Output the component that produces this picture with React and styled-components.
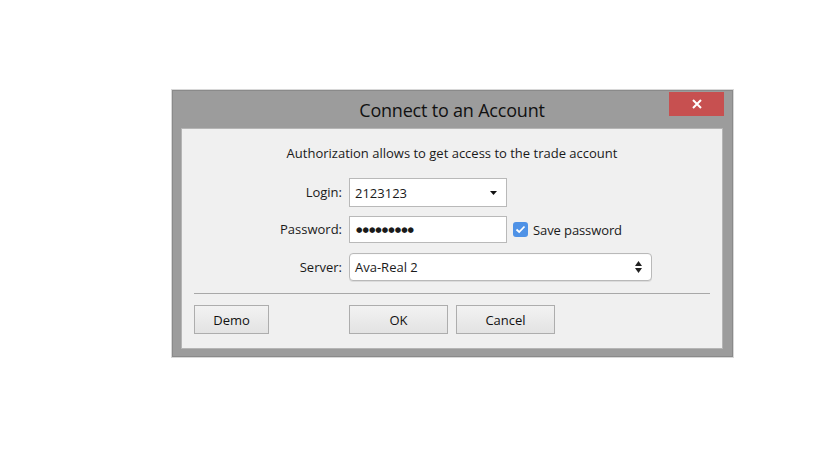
import React from 'react';
import styled, { createGlobalStyle } from 'styled-components';

const GlobalStyle = createGlobalStyle`
  html, body {
    margin: 0;
    padding: 0;
    background: #ffffff;
  }
  body {
    font-family: "Open Sans", "Noto Sans", sans-serif;
    color: #1a1a1a;
  }
`;

const Page = styled.div`
  width: 834px;
  height: 453px;
  padding: 90px 0 0 172px;
  box-sizing: border-box;
`;

const Window = styled.div`
  position: relative;
  width: 561px;
  background: #9c9c9c;
  border: 1px solid #8a8a8a;
  box-sizing: border-box;
  padding: 0 9px 7px 8px;
  box-shadow: 0 0 0 1px #d8d8d8;
`;

const TitleBar = styled.div`
  height: 37px;
  display: flex;
  align-items: center;
  justify-content: center;
  font-size: 18px;
  color: #111;
  letter-spacing: -0.2px;
`;

const CloseButton = styled.button`
  position: absolute;
  top: 1px;
  right: 8px;
  width: 55px;
  height: 24px;
  border: none;
  background: #c75050;
  color: #fff;
  display: flex;
  align-items: center;
  justify-content: center;
  padding: 0;
`;

const Content = styled.div`
  background: #f0f0f0;
  border: 1px solid #b5b5b5;
  padding: 15px 12px 14px 12px;
`;

const Subtitle = styled.div`
  text-align: center;
  font-size: 13px;
  line-height: 18px;
  margin-bottom: 16px;
`;

const Form = styled.div`
  display: grid;
  grid-template-columns: 148px 1fr;
  grid-template-rows: 29px 28px 28px;
  column-gap: 7px;
  row-gap: 9px;
  align-items: start;
`;

const Label = styled.div`
  text-align: right;
  font-size: 13px;
  line-height: ${p => p.$h}px;
`;

const FieldRow = styled.div`
  display: flex;
  align-items: center;
  gap: 6px;
`;

const Input = styled.div`
  width: ${p => p.$w}px;
  height: ${p => p.$h}px;
  box-sizing: border-box;
  background: #fff;
  border: 1px solid #b9b9b9;
  border-radius: ${p => (p.$round ? '4px' : '0')};
  display: flex;
  align-items: center;
  justify-content: space-between;
  padding: 0 9px 0 5px;
  font-size: 13px;
  ${p => p.$round && 'box-shadow: inset 0 1px 0 #fafafa, 0 1px 0 #dcdcdc;'}
`;

const Dots = styled.span`
  font-family: "DejaVu Sans", sans-serif;
  font-size: 7.4px;
  padding-left: 1px;
`;

const Check = styled.span`
  width: 15px;
  height: 15px;
  border-radius: 3px;
  background: #4f92e6;
  display: inline-flex;
  align-items: center;
  justify-content: center;
`;

const CheckLabel = styled.label`
  display: flex;
  align-items: center;
  gap: 5px;
  font-size: 13px;
  letter-spacing: -0.1px;
`;

const Separator = styled.div`
  height: 1px;
  background: #a8a8a8;
  margin: 12px 0 11px 0;
`;

const Buttons = styled.div`
  display: grid;
  grid-template-columns: 148px 1fr;
  column-gap: 7px;
`;

const ButtonGroup = styled.div`
  display: flex;
  gap: 8px;
`;

const Button = styled.button`
  width: ${p => p.$w}px;
  height: 29px;
  box-sizing: border-box;
  border: 1px solid #adadad;
  background: linear-gradient(#f2f2f2, #e3e3e3);
  font-family: "Open Sans", "Noto Sans", sans-serif;
  font-size: 13px;
  color: #111;
  padding: 0;
`;

const Caret = () => (
  <svg width="7" height="4" viewBox="0 0 7 4">
    <path d="M0 0 H7 L3.5 4 Z" fill="#111" />
  </svg>
);

const UpDown = () => (
  <svg width="7" height="12" viewBox="0 0 7 12">
    <path d="M0 5 L3.5 0 L7 5 Z" fill="#222" />
    <path d="M0 7 L3.5 12 L7 7 Z" fill="#222" />
  </svg>
);

export default function App() {
  return (
    <>
      <GlobalStyle />
      <Page>
        <Window>
          <TitleBar>Connect to an Account</TitleBar>
          <CloseButton aria-label="Close">
            <svg width="10" height="10" viewBox="0 0 10 10">
              <path d="M1 1 L9 9 M9 1 L1 9" stroke="#fff" strokeWidth="2" />
            </svg>
          </CloseButton>
          <Content>
            <Subtitle>Authorization allows to get access to the trade account</Subtitle>
            <Form>
              <Label $h={29}>Login:</Label>
              <FieldRow>
                <Input $w={158} $h={29}>
                  <span>2123123</span>
                  <Caret />
                </Input>
              </FieldRow>
              <Label $h={27}>Password:</Label>
              <FieldRow>
                <Input $w={158} $h={27}>
                  <Dots>●●●●●●●●●</Dots>
                </Input>
                <CheckLabel>
                  <Check>
                    <svg width="11" height="9" viewBox="0 0 11 9">
                      <path d="M1.5 4.5 L4.2 7 L9.5 1.5" stroke="#fff" strokeWidth="1.8" fill="none" />
                    </svg>
                  </Check>
                  Save password
                </CheckLabel>
              </FieldRow>
              <Label $h={28}>Server:</Label>
              <FieldRow>
                <Input $w={303} $h={28} $round>
                  <span>Ava-Real 2</span>
                  <UpDown />
                </Input>
              </FieldRow>
            </Form>
            <Separator />
            <Buttons>
              <div>
                <Button $w={75}>Demo</Button>
              </div>
              <ButtonGroup>
                <Button $w={99}>OK</Button>
                <Button $w={99}>Cancel</Button>
              </ButtonGroup>
            </Buttons>
          </Content>
        </Window>
      </Page>
    </>
  );
}
